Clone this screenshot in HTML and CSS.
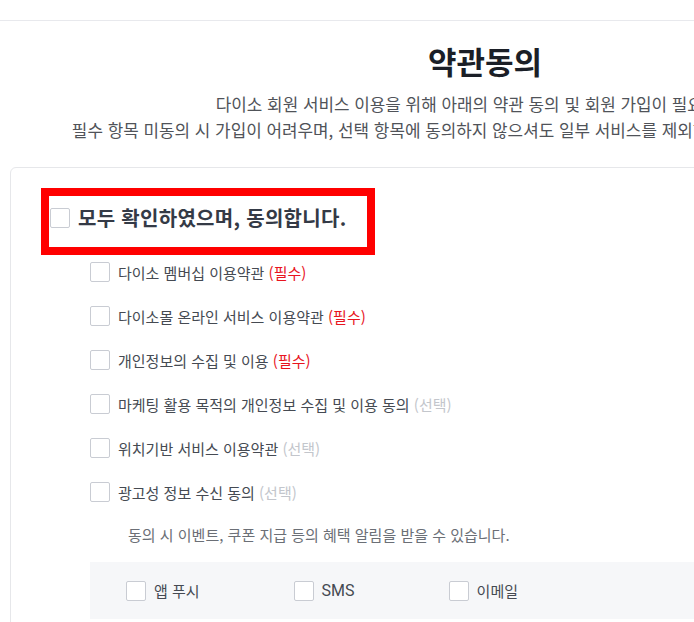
FILE: index.html
```html
<!DOCTYPE html>
<html lang="ko">
<head>
<meta charset="utf-8">
<title>약관동의</title>
<link rel="stylesheet" href="styles.css">
</head>
<body>
<header class="top-bar"></header>
<main class="wrap">
  <h1 class="title">약관동의</h1>
  <p class="intro">다이소 회원 서비스 이용을 위해 아래의 약관 동의 및 회원 가입이 필요합니다.<br>필수 항목 미동의 시 가입이 어려우며, 선택 항목에 동의하지 않으셔도 일부 서비스를 제외한 서비스 이용이 가능합니다.</p>
  <section class="card">
    <label class="all-row">
      <span class="box"></span>
      <span class="all-text">모두 확인하였으며, 동의합니다.</span>
    </label>
    <ul class="terms">
      <li class="term"><span class="box"></span><span>다이소 멤버십 이용약관 <em class="req">(필수)</em></span></li>
      <li class="term"><span class="box"></span><span>다이소몰 온라인 서비스 이용약관 <em class="req">(필수)</em></span></li>
      <li class="term"><span class="box"></span><span>개인정보의 수집 및 이용 <em class="req">(필수)</em></span></li>
      <li class="term"><span class="box"></span><span>마케팅 활용 목적의 개인정보 수집 및 이용 동의 <em class="opt">(선택)</em></span></li>
      <li class="term"><span class="box"></span><span>위치기반 서비스 이용약관 <em class="opt">(선택)</em></span></li>
      <li class="term"><span class="box"></span><span>광고성 정보 수신 동의 <em class="opt">(선택)</em></span></li>
    </ul>
    <p class="note">동의 시 이벤트, 쿠폰 지급 등의 혜택 알림을 받을 수 있습니다.</p>
    <div class="channels">
      <label class="channel"><span class="box"></span><span>앱 푸시</span></label>
      <label class="channel"><span class="box"></span><span class="latin">SMS</span></label>
      <label class="channel"><span class="box"></span><span>이메일</span></label>
    </div>
  </section>
</main>
</body>
</html>
```

FILE: styles.css
```css
html, body {
  margin: 0;
  padding: 0;
  background: #ffffff;
  overflow: hidden;
}
body {
  font-family: "Noto Sans CJK KR", "Noto Sans", sans-serif;
  color: #444;
}
.top-bar {
  height: 20px;
  border-bottom: 1px solid #e8e9ed;
}
.wrap {
  width: 950px;
  margin-left: 10px;
}
.title {
  margin: 20px 0 0;
  font-size: 31px;
  line-height: 40px;
  font-weight: 700;
  color: #1b1f27;
  text-align: center;
}
.intro {
  margin: 10px 0 0;
  font-size: 16.9px;
  line-height: 26px;
  color: #505359;
  text-align: center;
  white-space: nowrap;
}
.card {
  margin-top: 24px;
  border: 1px solid #e6e7ea;
  border-radius: 6px;
  padding: 28px 0 0 38px;
  min-height: 600px;
}
.box {
  flex: none;
  width: 20px;
  height: 20px;
  box-sizing: border-box;
  border: 1px solid #c9ccd3;
  border-radius: 2px;
  background: #fff;
}
.all-row {
  display: inline-flex;
  align-items: center;
  gap: 8px;
  height: 51px;
  box-sizing: border-box;
  padding: 0 20px 8px 1px;
  outline: 8px solid #ff0000;
}
.all-text {
  font-size: 20px;
  font-weight: 700;
  letter-spacing: 0.3px;
  color: #343a46;
  line-height: 30px;
}
.terms {
  list-style: none;
  margin: 3px 0 0;
  padding: 0 0 0 41px;
}
.term {
  display: flex;
  align-items: center;
  gap: 8px;
  height: 44px;
  font-size: 15px;
  color: #454a52;
}
.term em {
  font-style: normal;
}
.req { color: #e8141e; }
.opt { color: #c3c6cc; }
.note {
  margin: 11px 0 0 79px;
  font-size: 15px;
  line-height: 20px;
  color: #6b6f76;
}
.channels {
  margin: 17px 0 0 41px;
  background: #f6f7f9;
  padding: 18px 36px;
  display: flex;
  gap: 94px;
}
.channel {
  display: flex;
  align-items: center;
  gap: 8px;
  font-size: 15px;
  color: #454a52;
}
.latin {
  font-family: Roboto, "Noto Sans CJK KR", sans-serif;
  font-size: 16px;
}
```
